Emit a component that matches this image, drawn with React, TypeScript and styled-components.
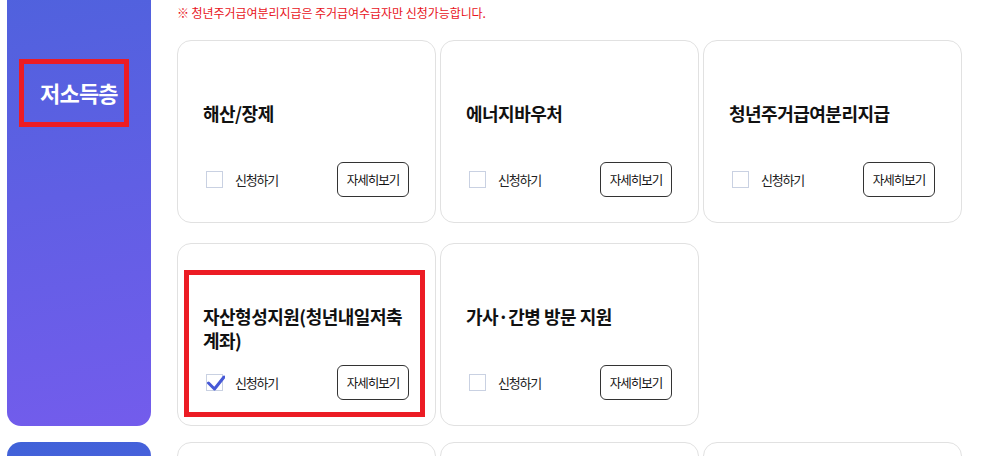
import * as React from "react";
import styled, { createGlobalStyle } from "styled-components";

const GlobalStyle = createGlobalStyle`
  html, body {
    margin: 0;
    padding: 0;
    overflow: hidden;
    background: #ffffff;
    font-family: "Noto Sans CJK KR", "Noto Sans", sans-serif;
  }
`;

const Page = styled.div`
  display: flex;
  flex-direction: column;
  gap: 16px;
  margin-top: -40px;
  padding: 0 25px 0 7px;
`;

const Section = styled.section`
  display: flex;
  gap: 26px;
`;

const Sidebar = styled.div<{ $from: string; $to: string }>`
  width: 144px;
  flex-shrink: 0;
  border-radius: 14px;
  padding: 99px 0 0 12px;
  box-sizing: border-box;
  background: linear-gradient(170deg, ${(p) => p.$from} 0%, ${(p) => p.$to} 100%);
`;

const SideLabel = styled.div`
  display: inline-block;
  border: 5px solid #ec1c24;
  height: 58px;
  line-height: 56px;
  padding: 0 6px 0 16px;
  color: #ffffff;
  font-size: 22px;
  font-weight: 700;
  letter-spacing: -0.8px;
`;

const Content = styled.div<{ $top: number }>`
  padding-top: ${(p) => p.$top}px;
`;

const Notice = styled.p`
  margin: 0 0 17px;
  height: 20px;
  line-height: 20px;
  color: #e8141c;
  font-size: 12px;
  letter-spacing: -0.05px;
`;

const Grid = styled.div`
  display: grid;
  grid-template-columns: repeat(3, 259px);
  column-gap: 4px;
  row-gap: 20px;
`;

const Card = styled.div`
  position: relative;
  height: 183px;
  box-sizing: border-box;
  border: 1px solid #e1e1e1;
  border-radius: 14px;
  padding: 60px 26px 25px 25px;
  display: flex;
  flex-direction: column;
  background: #ffffff;
`;

const Title = styled.h3`
  margin: 0;
  font-size: 18px;
  line-height: 24px;
  font-weight: 700;
  color: #111111;
  letter-spacing: -0.5px;
`;

const Footer = styled.div`
  margin-top: auto;
  display: flex;
  align-items: center;
  justify-content: space-between;
`;

const Check = styled.label`
  display: flex;
  align-items: center;
  gap: 12px;
  margin-left: 3px;
  font-size: 13px;
  color: #222222;
  letter-spacing: -1.2px;
`;

const Box = styled.span`
  position: relative;
  width: 17px;
  height: 17px;
  border: 1px solid #c9d1e2;
  background: #ffffff;
  box-sizing: border-box;

  svg {
    position: absolute;
    left: -1px;
    top: -1px;
  }
`;

const DetailButton = styled.button`
  width: 72px;
  height: 35px;
  padding: 0;
  border: 1px solid #333333;
  border-radius: 6px;
  background: #ffffff;
  color: #111111;
  font-family: inherit;
  font-size: 12.5px;
  letter-spacing: -1px;
  cursor: pointer;
`;

const Highlight = styled.div`
  position: absolute;
  left: 6px;
  top: 26px;
  right: 10px;
  bottom: 8px;
  border: 5px solid #ec1c24;
  pointer-events: none;
`;

type Item = { title: string; checked?: boolean; marked?: boolean };

const CheckMark = () => (
  <svg width="19" height="19" viewBox="0 0 19 19">
    <polyline
      points="2.5,9 8.5,15 18,3"
      fill="none"
      stroke="#4759d6"
      strokeWidth="3"
      strokeLinecap="round"
      strokeLinejoin="round"
    />
  </svg>
);

const SupportCard = ({ item }: { item: Item }) => (
  <Card>
    <Title>{item.title}</Title>
    <Footer>
      <Check>
        <Box>{item.checked && <CheckMark />}</Box>
        신청하기
      </Check>
      <DetailButton>자세히보기</DetailButton>
    </Footer>
    {item.marked && <Highlight />}
  </Card>
);

const lowIncome: Item[] = [
  { title: "해산/장제" },
  { title: "에너지바우처" },
  { title: "청년주거급여분리지급" },
  { title: "자산형성지원(청년내일저축계좌)", checked: true, marked: true },
  { title: "가사·간병 방문 지원" },
];

export default function App() {
  return (
    <>
      <GlobalStyle />
      <Page>
        <Section>
          <Sidebar $from="#4d62dc" $to="#735cec">
            <SideLabel>저소득층</SideLabel>
          </Sidebar>
          <Content $top={43}>
            <Notice>※ 청년주거급여분리지급은 주거급여수급자만 신청가능합니다.</Notice>
            <Grid>
              {lowIncome.map((item) => (
                <SupportCard key={item.title} item={item} />
              ))}
            </Grid>
          </Content>
        </Section>
        <Section>
          <Sidebar $from="#3f62d8" $to="#6a5ce8" />
          <Content $top={0}>
            <Grid>
              {[0, 1, 2].map((i) => (
                <Card key={i} />
              ))}
            </Grid>
          </Content>
        </Section>
      </Page>
    </>
  );
}
